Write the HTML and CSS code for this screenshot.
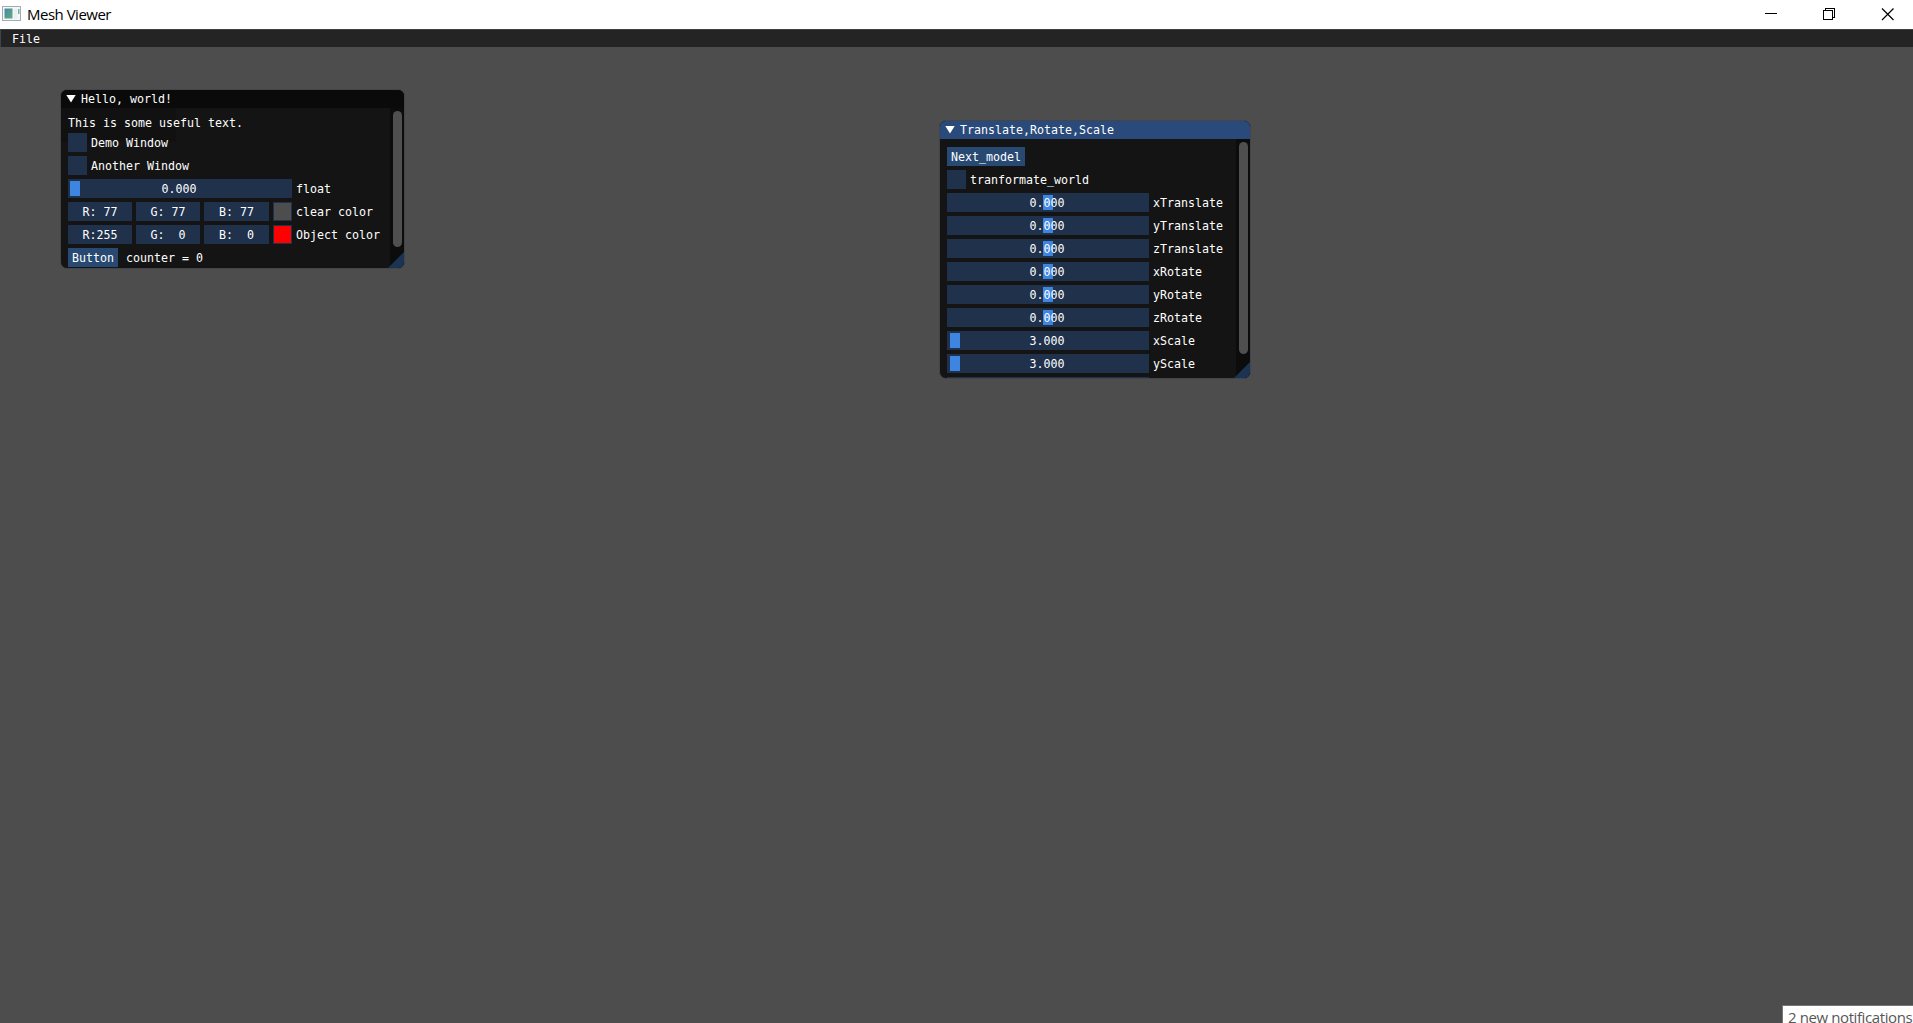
FILE: index.html
```html
<!DOCTYPE html>
<html lang="en">
<head>
<meta charset="utf-8">
<title>Mesh Viewer</title>
<link rel="stylesheet" href="styles.css">
</head>
<body>
<header class="titlebar">
  <svg class="app-icon" width="20" height="16" viewBox="0 0 20 16">
    <defs><linearGradient id="pane" x1="0" y1="0" x2="1" y2="1"><stop offset="0" stop-color="#4a86a8"/><stop offset="1" stop-color="#5cae7c"/></linearGradient></defs>
    <rect x=".5" y=".5" width="18" height="14" fill="#f4f6f8" stroke="#a5abb3"/>
    <rect x="2.500" y="2.500" width="8" height="10" fill="url(#pane)"/>
    <rect x="12" y="3" width="3" height="10" fill="#eceef1"/>
    <rect x="16" y="3" width="1.500" height="5" fill="#6fb39a"/>
  </svg>
  <span class="app-title">Mesh Viewer</span>
  <svg class="controls" width="130" height="14" viewBox="0 0 130 14" fill="none" stroke="#000" shape-rendering="crispEdges">
    <path d="M0 5.500h12M58.500 2.500h9v9h-9zM60.500 2.500v-2h9v9h-2"/>
    <path d="M117 .5l11.500 11.500M128.500 .5l-11.500 11.500" stroke-width="1.200" shape-rendering="auto"/>
  </svg>
</header>
<nav class="menubar"><span>File</span></nav>
<main class="viewport">
  <section class="window hello">
    <h2 class="caption"><i class="arrow"></i>Hello, world!</h2>
    <div class="body">
      <div class="content">
        <p class="text">This is some useful text.</p>
        <div class="row"><i class="check"></i><span>Demo Window</span></div>
        <div class="row"><i class="check"></i><span>Another Window</span></div>
        <div class="row"><div class="slider"><i class="grab low"></i><b>0.000</b></div><span>float</span></div>
        <div class="row"><b class="field">R: 77</b><b class="field">G: 77</b><b class="field wide">B: 77</b><i class="swatch gray"></i><span>clear color</span></div>
        <div class="row"><b class="field">R:255</b><b class="field">G:&nbsp; 0</b><b class="field wide">B:&nbsp; 0</b><i class="swatch red"></i><span>Object color</span></div>
        <div class="row"><b class="button">Button</b><span class="counter">counter = 0</span></div>
      </div>
      <div class="scroll"><i></i></div>
    </div>
    <i class="grip"></i>
  </section>
  <section class="window transform">
    <h2 class="caption"><i class="arrow"></i>Translate,Rotate,Scale</h2>
    <div class="body">
      <div class="content">
        <div class="row"><b class="button">Next_model</b></div>
        <div class="row"><i class="check"></i><span>tranformate_world</span></div>
        <div class="row"><div class="slider"><i class="grab mid"></i><b>0.000</b></div><span>xTranslate</span></div>
        <div class="row"><div class="slider"><i class="grab mid"></i><b>0.000</b></div><span>yTranslate</span></div>
        <div class="row"><div class="slider"><i class="grab mid"></i><b>0.000</b></div><span>zTranslate</span></div>
        <div class="row"><div class="slider"><i class="grab mid"></i><b>0.000</b></div><span>xRotate</span></div>
        <div class="row"><div class="slider"><i class="grab mid"></i><b>0.000</b></div><span>yRotate</span></div>
        <div class="row"><div class="slider"><i class="grab mid"></i><b>0.000</b></div><span>zRotate</span></div>
        <div class="row"><div class="slider"><i class="grab min"></i><b>3.000</b></div><span>xScale</span></div>
        <div class="row"><div class="slider"><i class="grab min"></i><b>3.000</b></div><span>yScale</span></div>
        <div class="row"><div class="slider"></div></div>
      </div>
      <div class="scroll"><i></i></div>
    </div>
    <i class="grip"></i>
  </section>
  <aside class="notice">2 new notifications</aside>
</main>
</body>
</html>
```

FILE: styles.css
```css
* { box-sizing: border-box; }
body {
  margin: 0;
  height: 1023px;
  display: flex;
  flex-direction: column;
  overflow: hidden;
  background: #4d4d4d;
  color: #fff;
  font: 11.63px/19px "DejaVu Sans Mono", monospace;
}
b, i { font-style: normal; font-weight: 400; display: block; }
.titlebar {
  flex: none;
  height: 29px;
  display: flex;
  align-items: center;
  padding: 0 18px 0 2px;
  background: #fff;
  color: #000;
}
.app-icon { margin-top: -1px; }
.app-title { margin-left: 5px; font: 15px/29px "Open Sans", sans-serif; letter-spacing: -0.5px; }
.controls { margin-left: auto; margin-top: 1px; }
.menubar {
  flex: none;
  height: 18px;
  padding-left: 11px;
  line-height: 19px;
  background: #242424;
  border-top: 1px solid #3c403f;
  border-left: 1px solid #42424b;
}
.viewport { flex: 1; }
.window {
  position: absolute;
  overflow: hidden;
  display: flex;
  flex-direction: column;
  border: 1px solid #44444c;
  border-radius: 7px;
  background: #141414;
}
.hello { left: 60px; top: 89px; width: 345px; height: 180px; }
.transform { left: 939px; top: 120px; width: 312px; height: 259px; }
.caption {
  flex: none;
  display: flex;
  align-items: center;
  gap: 5px;
  height: 18px;
  margin: 0;
  padding-left: 5px;
  font: inherit;
  line-height: 18px;
  background: #0a0a0a;
}
.transform .caption { background: #294a7a; }
.arrow { width: 10px; height: 8px; margin-top: -1px; background: #fff; clip-path: polygon(0 0, 100% 0, 50% 100%); }
.body { flex: 1; min-height: 0; display: flex; }
.content { flex: 1; padding: 8px 0 0 7px; display: flex; flex-direction: column; gap: 4px; white-space: pre; overflow: hidden; }
.hello .content { background: linear-gradient(#111, #111) 0 0 / 115px 34px no-repeat; }
.text { margin: 0; height: 13px; line-height: 14px; flex: none; }
.row { flex: none; height: 19px; line-height: 21px; display: flex; gap: 4px; }
.check { width: 19px; background: #20314c; }
.slider { position: relative; width: 224px; background: #20314c; text-align: center; }
.transform .slider { width: 202px; }
.slider b { position: relative; left: -1px; }
.grab { position: absolute; top: 2px; width: 10px; height: 15px; background: #3d85e0; }
.low { left: 2px; }
.min { left: 3px; }
.mid { left: 96px; }
.field { width: 64px; background: #20314c; text-align: center; }
.wide { width: 65px; }
.swatch { width: 19px; border: 1px solid #20314c; }
.gray { background: #4d4d4d; }
.red { background: #f00; }
.button { padding: 0 4px; background: #274972; }
.counter { margin-left: 4px; }
.scroll { width: 14px; padding: 3px; background: #0c0c0c; }
.scroll i { width: 9px; height: 136px; border-radius: 4.5px; background: #4f4f4f; }
.transform .scroll i { height: 212px; }
.grip { position: absolute; right: 0; bottom: 0; width: 16px; height: 16px; background: #1b3454; clip-path: polygon(100% 0, 100% 100%, 0 100%); }
.notice {
  position: absolute;
  left: 1782px;
  top: 1005px;
  width: 131px;
  height: 18px;
  overflow: hidden;
  padding-left: 5px;
  white-space: nowrap;
  background: #fff;
  border: 1px solid #767676;
  border-width: 1px 0 0 1px;
  color: #575757;
  font: 15px/23px "Open Sans", sans-serif;
  letter-spacing: -0.4px;
}
```
